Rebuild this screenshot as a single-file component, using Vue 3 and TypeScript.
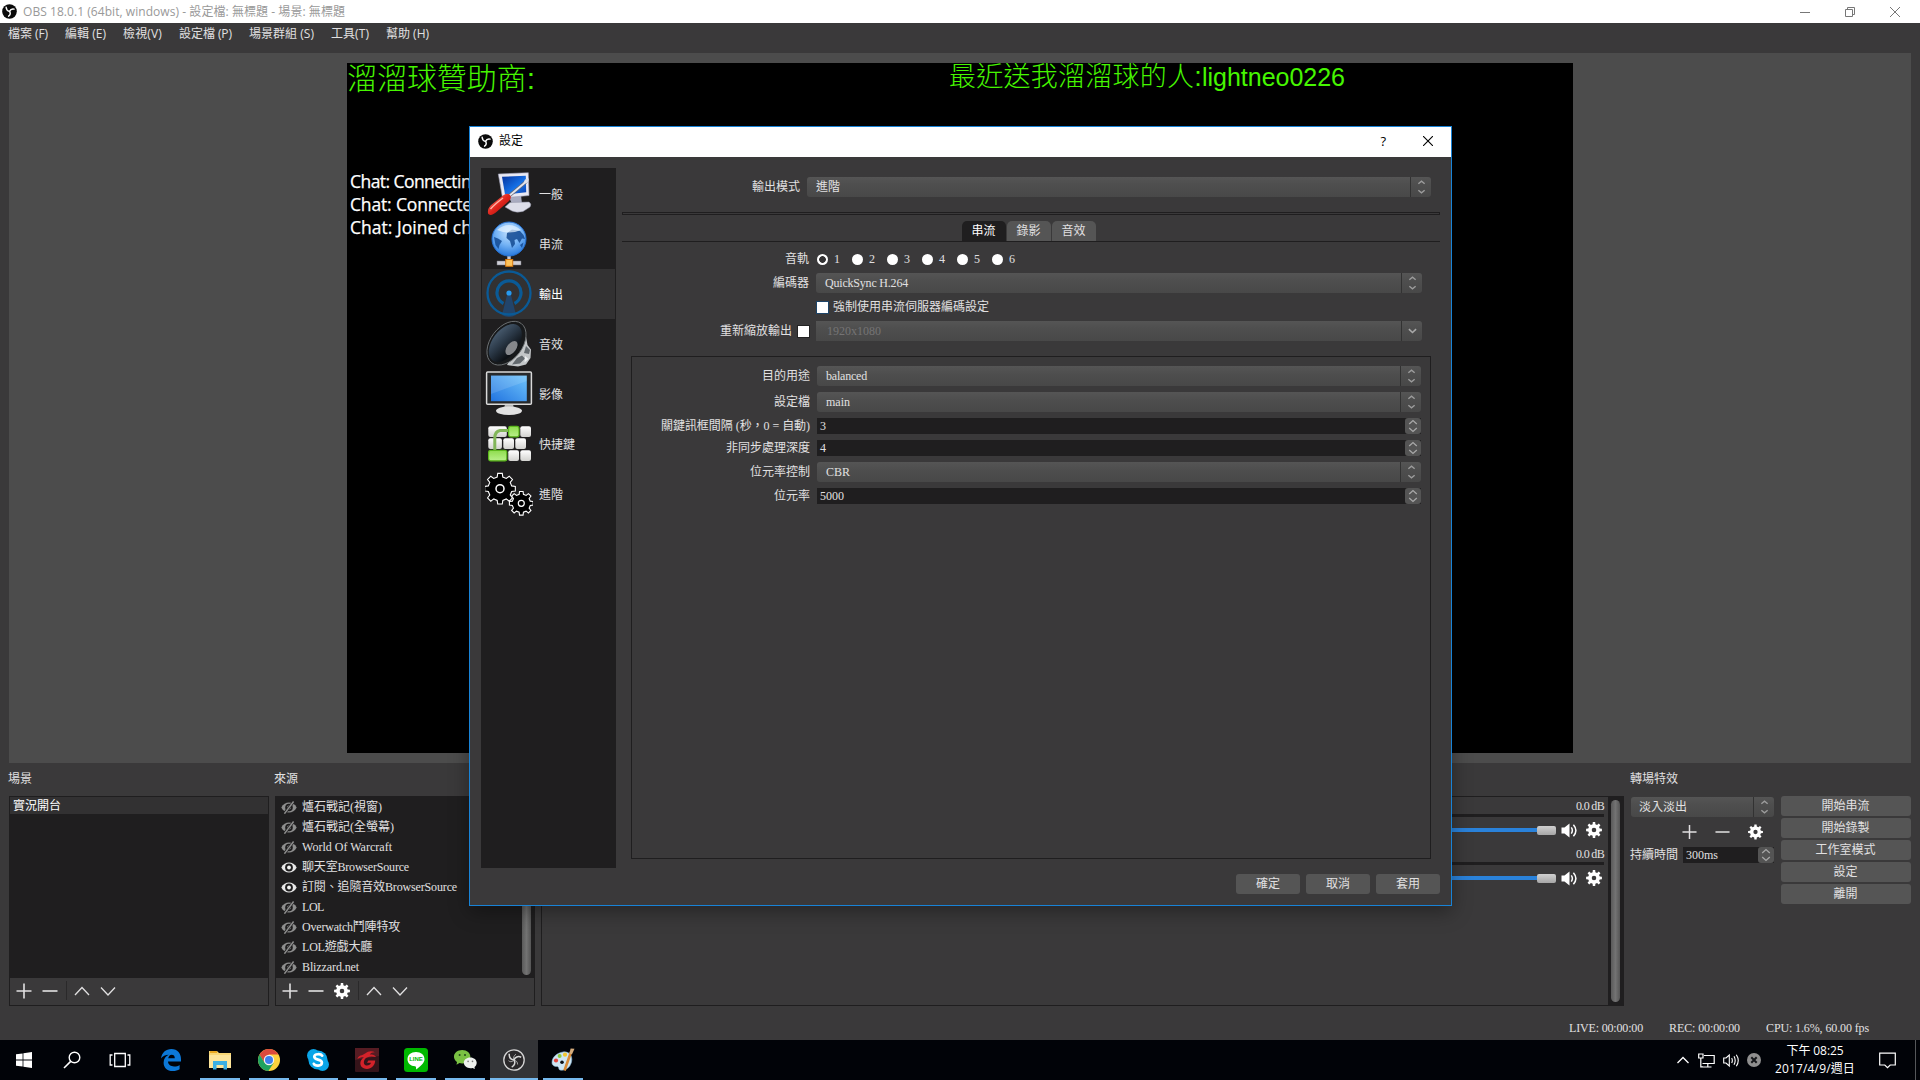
<script setup lang="ts">
interface Source { name: string; width: number; visible: boolean }
interface Field { label: string; labelWidth: number; value: string; valueWidth: number; kind: 'combo' | 'spin' }

// Spreads a text over a fixed width by adjusting its letter spacing.
const vFit = {
  mounted(el: HTMLElement, binding: { value: number }) {
    const count = Array.from(el.textContent ?? '').length
    if (!count) return
    const width = el.getBoundingClientRect().width
    el.style.letterSpacing = `${(binding.value - width) / count}px`
  },
}

// Outline of a toothed wheel.
function gear(cx: number, cy: number, outer: number, inner: number, teeth = 8): string {
  const step = (Math.PI * 2) / teeth
  const points: string[] = []
  for (let i = 0; i < teeth; i++) {
    const a = i * step - Math.PI / 2
    const corners: [number, number][] = [[-0.3, inner], [-0.19, outer], [0.19, outer], [0.3, inner]]
    for (const [offset, r] of corners) {
      const t = a + offset * step
      points.push(`${(cx + r * Math.cos(t)).toFixed(2)} ${(cy + r * Math.sin(t)).toFixed(2)}`)
    }
  }
  return `M${points.join('L')}Z`
}
function ring(cx: number, cy: number, r: number): string {
  return `M${cx - r} ${cy}a${r} ${r} 0 1 0 ${2 * r} 0a${r} ${r} 0 1 0 ${-2 * r} 0Z`
}
const solidGear = gear(8, 8, 8, 5.9) + ring(8, 8, 2.3)
const bigGear = gear(15, 18.7, 15.5, 12)
const smallGear = gear(36.3, 33.3, 12, 9.2)

const menus = [
  { text: '檔案 (F)', width: 40 },
  { text: '編輯 (E)', width: 41 },
  { text: '檢視(V)', width: 39 },
  { text: '設定檔 (P)', width: 53 },
  { text: '場景群組 (S)', width: 65 },
  { text: '工具(T)', width: 38 },
  { text: '幫助 (H)', width: 43 },
]

const sources: Source[] = [
  { name: '爐石戰記(視窗)', width: 80, visible: false },
  { name: '爐石戰記(全螢幕)', width: 92, visible: false },
  { name: 'World Of Warcraft', width: 90, visible: false },
  { name: '聊天室BrowserSource', width: 107, visible: true },
  { name: '訂閱、追隨音效BrowserSource', width: 155, visible: true },
  { name: 'LOL', width: 22, visible: false },
  { name: 'Overwatch鬥陣特攻', width: 98, visible: false },
  { name: 'LOL遊戲大廳', width: 70, visible: false },
  { name: 'Blizzard.net', width: 57, visible: false },
]

const pages = [
  { id: 'general', name: '一般' },
  { id: 'stream', name: '串流' },
  { id: 'output', name: '輸出' },
  { id: 'audio', name: '音效' },
  { id: 'video', name: '影像' },
  { id: 'hotkeys', name: '快捷鍵' },
  { id: 'advanced', name: '進階' },
]
const currentPage = 'output'
const tabs = ['串流', '錄影', '音效']
const tracks = [1, 2, 3, 4, 5, 6]

const fields: Field[] = [
  { label: '目的用途', labelWidth: 48, value: 'balanced', valueWidth: 41, kind: 'combo' },
  { label: '設定檔', labelWidth: 36, value: 'main', valueWidth: 24, kind: 'combo' },
  { label: '關鍵訊框間隔 (秒，0 = 自動)', labelWidth: 149, value: '3', valueWidth: 6, kind: 'spin' },
  { label: '非同步處理深度', labelWidth: 84, value: '4', valueWidth: 6, kind: 'spin' },
  { label: '位元率控制', labelWidth: 60, value: 'CBR', valueWidth: 24, kind: 'combo' },
  { label: '位元率', labelWidth: 36, value: '5000', valueWidth: 24, kind: 'spin' },
]
const controls = ['開始串流', '開始錄製', '工作室模式', '設定', '離開']
</script>

<template>
  <div class="screen">
    <svg class="defs" width="0" height="0">
      <symbol id="obs" viewBox="0 0 16 16">
        <circle cx="8" cy="8" r="7.8" fill="#0a0a0a" />
        <g fill="none" stroke="#fff" stroke-width="1.5" stroke-linecap="round">
          <path d="M4.4 3.4C4.6 6 6 7.4 8 7.9" />
          <path d="M12.9 5.4C10.6 4.9 8.8 6 8 7.9" />
          <path d="M7 13C8.9 11.6 9.2 9.6 8 7.9" />
        </g>
      </symbol>
      <symbol id="updown" viewBox="0 0 8 14">
        <path d="M1.2 4.2L4 1.8L6.8 4.2M1.2 9.8L4 12.2L6.8 9.8" fill="none" stroke="#9c9c9c" stroke-width="1.2" />
      </symbol>
      <symbol id="step" viewBox="0 0 10 14">
        <path d="M1.2 5L5 1.6L8.8 5M1.2 9L5 12.4L8.8 9" fill="none" stroke="#a8a8a8" stroke-width="1.3" />
      </symbol>
      <symbol id="plus" viewBox="0 0 16 16"><path d="M8 0.5V15.5M0.5 8H15.5" stroke="#e1e0e1" stroke-width="1.6" /></symbol>
      <symbol id="minus" viewBox="0 0 16 16"><path d="M0.5 8H15.5" stroke="#d0d0d0" stroke-width="1.8" /></symbol>
      <symbol id="up" viewBox="0 0 16 16"><path d="M1 12L8 4.5L15 12" fill="none" stroke="#e1e0e1" stroke-width="1.3" /></symbol>
      <symbol id="down" viewBox="0 0 16 16"><path d="M1 4.5L8 12L15 4.5" fill="none" stroke="#e1e0e1" stroke-width="1.3" /></symbol>
      <symbol id="gear" viewBox="0 0 16 16"><path :d="solidGear" fill="#fff" fill-rule="evenodd" /></symbol>
      <symbol id="eye" viewBox="0 0 16 12">
        <path d="M0.3 6C3.6-.6 12.4-.6 15.7 6C12.4 12.6 3.6 12.6 .3 6Z" fill="#e8e8e8" />
        <circle cx="8" cy="6" r="3.9" fill="#1f1e1f" /><circle cx="8" cy="6" r="1.9" fill="#f4f4f4" />
      </symbol>
      <symbol id="eye-off" viewBox="0 0 16 12">
        <path d="M0.3 6C3.6-.6 12.4-.6 15.7 6C12.4 12.6 3.6 12.6 .3 6Z" fill="#8d8d8d" />
        <circle cx="8" cy="6" r="3.8" fill="#1f1e1f" /><circle cx="8" cy="6" r="2" fill="#8d8d8d" />
        <path d="M3.2 12.2L13.2-.5" stroke="#1f1e1f" stroke-width="2.8" /><path d="M3.4 12.2L12.6 0" stroke="#8d8d8d" stroke-width="1.5" />
      </symbol>
      <symbol id="speaker" viewBox="0 0 17 15">
        <path d="M.5 4.5H3.5L8.5 .5V14.5L3.5 10.5H.5Z" fill="#fff" />
        <path d="M10.3 4.4Q12.4 7.5 10.3 10.6M12.4 1.8Q17.4 7.5 12.4 13.2" fill="none" stroke="#fff" stroke-width="1.5" />
      </symbol>
    </svg>

    <header class="titlebar">
      <svg class="title-logo"><use href="#obs" /></svg>
      <span v-fit="322" class="t">OBS 18.0.1 (64bit, windows) - 設定檔: 無標題 - 場景: 無標題</span>
      <div class="window-controls">
        <svg viewBox="0 0 10 10"><path d="M0 5.5H10" stroke="#777" /></svg>
        <svg viewBox="0 0 10 10"><path d="M.5 2.5H7.5V9.5H.5ZM2.5 2.5V.5H9.5V7.5H7.5" fill="none" stroke="#777" /></svg>
        <svg viewBox="0 0 10 10"><path d="M0 0L10 10M10 0L0 10" stroke="#777" /></svg>
      </div>
    </header>

    <nav class="menubar">
      <span v-for="m in menus" :key="m.text" v-fit="m.width" class="t">{{ m.text }}</span>
    </nav>

    <main class="preview">
      <div class="canvas">
        <div class="canvas-head">
          <div class="sponsor"><span v-fit="188" class="t">溜溜球贊助商:</span></div>
          <span v-fit="253" class="t recent">最近送我溜溜球的人:</span>
          <span v-fit="143" class="t donor">lightneo0226</span>
        </div>
        <div class="chat">
          <p><span v-fit="130" class="t">Chat: Connecting</span></p>
          <p><span v-fit="137" class="t">Chat: Connected.</span></p>
          <p><span v-fit="138" class="t">Chat: Joined chat</span></p>
        </div>
      </div>
    </main>

    <section class="docks">
      <div class="dock scenes">
        <h2><span v-fit="24" class="t">場景</span></h2>
        <div class="panel">
          <div class="list"><div class="scene"><span v-fit="48" class="t">實況開台</span></div></div>
          <div class="tools">
            <svg><use href="#plus" /></svg><svg><use href="#minus" /></svg><i></i>
            <svg><use href="#up" /></svg><svg><use href="#down" /></svg>
          </div>
        </div>
      </div>
      <div class="dock sources">
        <h2><span v-fit="24" class="t">來源</span></h2>
        <div class="panel">
          <div class="list with-scroll">
            <div class="items">
              <div v-for="s in sources" :key="s.name" class="source">
                <svg><use :href="s.visible ? '#eye' : '#eye-off'" /></svg>
                <span v-fit="s.width" class="t">{{ s.name }}</span>
              </div>
            </div>
            <div class="scroll"><b></b></div>
          </div>
          <div class="tools">
            <svg><use href="#plus" /></svg><svg><use href="#minus" /></svg><svg><use href="#gear" /></svg><i></i>
            <svg><use href="#up" /></svg><svg><use href="#down" /></svg>
          </div>
        </div>
      </div>
      <div class="dock mixer">
        <h2></h2>
        <div class="panel mixer-panel">
          <div class="channels">
            <div v-for="n in 2" :key="n" class="channel">
              <div class="db"><span v-fit="28" class="t">0.0 dB</span></div>
              <div class="meter"></div>
              <div class="volume">
                <div class="track"></div><div class="knob"></div>
                <svg class="spk"><use href="#speaker" /></svg>
                <svg class="cog"><use href="#gear" /></svg>
              </div>
            </div>
          </div>
          <div class="scroll"><b></b></div>
        </div>
      </div>
      <div class="dock transitions">
        <h2><span v-fit="48" class="t">轉場特效</span></h2>
        <div class="combo"><span v-fit="48" class="t">淡入淡出</span><div class="arrow"><svg><use href="#updown" /></svg></div></div>
        <div class="trans-tools">
          <svg><use href="#plus" /></svg><svg><use href="#minus" /></svg><svg><use href="#gear" /></svg>
        </div>
        <div class="duration">
          <span v-fit="48" class="t">持續時間</span>
          <div class="spin"><span v-fit="32" class="t">300ms</span><div class="stepper"><svg><use href="#step" /></svg></div></div>
        </div>
      </div>
      <div class="dock controls">
        <h2></h2>
        <button v-for="c in controls" :key="c"><span v-fit="c.length * 12" class="t">{{ c }}</span></button>
      </div>
    </section>

    <div class="status">
      <span v-fit="74" class="t">LIVE: 00:00:00</span>
      <span v-fit="71" class="t">REC: 00:00:00</span>
      <span v-fit="103" class="t">CPU: 1.6%, 60.00 fps</span>
    </div>

    <footer class="taskbar">
      <div class="task start">
        <svg width="16" height="16" viewBox="0 0 16 16"><path d="M0 2.3L6.6 1.4V7.6H0ZM7.4 1.2L16 0V7.6H7.4ZM0 8.4H6.6V14.6L0 13.7ZM7.4 8.4H16V16L7.4 14.8Z" fill="#fff" /></svg>
      </div>
      <div class="task start">
        <svg width="18" height="18" viewBox="0 0 18 18"><circle cx="11.5" cy="6.5" r="5.3" fill="none" stroke="#fff" stroke-width="1.4" /><path d="M7.7 10.4L1 17" stroke="#fff" stroke-width="1.6" /></svg>
      </div>
      <div class="task start">
        <svg width="22" height="16" viewBox="0 0 22 16"><path d="M5.7 1.5H16.3V14.5H5.7ZM3.5 3H1.2V13H3.5M18.5 3H20.8V13H18.5" fill="none" stroke="#fff" stroke-width="1.3" /></svg>
      </div>
      <div class="task edge">
        <svg width="20" height="22" viewBox="0 0 20 22"><path d="M0 9.4C.8 3.8 4.8 0 10.4 0C16.6 0 20 4.6 20 10V12.6H7C7.2 16 10 17.5 13 17.5C15.4 17.5 17.3 16.8 18.6 15.9V20.2C16.8 21.3 14.5 22 11.8 22C6 22 2.6 18.5 2.6 13.7C2.6 10 4.7 7.2 7.8 5.8C4.3 6 1.6 7.3 0 9.4ZM7.2 9.3H13.8C13.8 6.8 12.6 5.7 10.7 5.7C8.8 5.7 7.6 7.2 7.2 9.3Z" fill="#0c78d7" fill-rule="evenodd" /></svg>
      </div>
      <div class="task run">
        <svg width="22" height="20" viewBox="0 0 22 20"><path d="M0 1H8L10 3H22V18H0Z" fill="#f8d775" /><path d="M1 1H8V3H1Z" fill="#e9a820" /><path d="M0 5H22V18H0Z" fill="#fde59a" /><path d="M4 19.5V11H18V19.5H14.5V15H7.5V19.5Z" fill="#3bb0e4" /></svg>
      </div>
      <div class="task run">
        <svg width="22" height="22" viewBox="0 0 22 22"><circle cx="11" cy="11" r="11" fill="#fdd23e" /><path d="M1.5 5.5A11 11 0 0 1 20.5 5.5H11L6.2 13.5Z" fill="#dc4a3d" /><path d="M1.5 5.5A11 11 0 0 0 10.4 22L15.6 14L6.4 13.6Z" fill="#1fa260" /><circle cx="11" cy="11" r="5.2" fill="#f4f4f4" /><circle cx="11" cy="11" r="4" fill="#3e7fec" /></svg>
      </div>
      <div class="task run">
        <svg width="22" height="22" viewBox="0 0 22 22"><circle cx="6.5" cy="6.5" r="6.5" fill="#0aa5e8" /><circle cx="15.5" cy="15.5" r="6.5" fill="#0aa5e8" /><circle cx="11" cy="11" r="9.6" fill="#0aa5e8" /><path d="M15.2 6.7C14 4.8 7.4 4.3 7.3 7.8C7.3 11.6 15 9.7 14.9 13.8C14.8 17.6 8 17.4 6.8 14.8" fill="none" stroke="#fff" stroke-width="2.7" stroke-linecap="round" /></svg>
      </div>
      <div class="task run">
        <svg width="24" height="24" viewBox="0 0 24 24"><rect width="24" height="24" rx="1" fill="#35141a" /><path d="M0 0H24V8L0 12Z" fill="#561c23" /><path d="M2.5 11C3.5 6.5 7 8 10.5 5.2C13 3.2 16.5 2.4 20.5 4.4C17.5 4.2 15.8 5 14.8 6.6C17.6 6 19.8 6.8 21 9C16.5 7.8 11.5 8.4 9.8 11.2C7.8 14.5 9.2 17.6 12 17.6C14 17.6 15.4 16.6 16 14.8H12L13.4 12.6H20.2C20 17.6 16.4 21 12 21C7 21 4.4 17.4 5.6 13.6C6.2 11.8 7.4 10.2 9 9.2C6.8 9 4.4 9.4 2.5 11Z" fill="#d3222a" /></svg>
      </div>
      <div class="task run">
        <svg width="24" height="24" viewBox="0 0 24 24"><rect width="24" height="24" rx="3.5" fill="#00b900" /><path d="M12 4C17 4 20.5 7 20.5 11.2C20.5 15 16 18.6 12 21.5C12.4 19.8 12 18.5 11 18.3C6.8 18 3.5 15.2 3.5 11.2C3.5 7 7 4 12 4Z" fill="#fff" /><text x="12" y="13.2" text-anchor="middle" class="line-word">LINE</text></svg>
      </div>
      <div class="task run">
        <svg width="23" height="20" viewBox="0 0 23 20"><path d="M8.2 0C13 0 16.4 3 16.4 6.8C16.4 10.5 13 13.4 8.2 13.4L5.5 13L2.5 14.8L3 12C-3 7.5 .5 0 8.2 0Z" fill="#7ac143" /><path d="M16.3 7.5C20 7.5 22.7 9.8 22.7 12.8C22.7 14.6 21.8 16 20.5 17L20.8 19L18.6 17.9C14 19 9.8 16.3 9.8 12.8C9.8 9.8 12.6 7.5 16.3 7.5Z" fill="#eef1ee" /><circle cx="5.6" cy="4.9" r="1" fill="#24461a" /><circle cx="11" cy="4.9" r="1" fill="#24461a" /><circle cx="14.1" cy="11.4" r=".8" fill="#777" /><circle cx="18.5" cy="11.4" r=".8" fill="#777" /></svg>
      </div>
      <div class="task run active">
        <svg width="22" height="22" viewBox="0 0 22 22"><circle cx="11" cy="11" r="10.2" fill="#2a282a" stroke="#d6d6d6" stroke-width="1.3" /><g fill="none" stroke="#d6d6d6" stroke-width="1.5"><path d="M6.2 4.7C6 8.2 8 10.6 11 11" /><path d="M18.2 8.2C15 6.8 12 8 11 11" /><path d="M8.7 18.2C11.5 16.8 12.7 13.6 11 11" /><path d="M5.5 11.7C7 13 8.7 13.2 10.5 11.5M14.6 15.5C14.6 13.2 13.5 11.7 11.5 11.3M13 5.2C11 6.5 10.2 8.5 10.7 10.5" stroke-width=".7" /></g></svg>
      </div>
      <div class="task run">
        <svg width="24" height="24" viewBox="0 0 24 24"><path d="M12 4C18 3 22 8 20.5 14C19 20 14 23 9 22C7 21.5 8.6 19.5 6.5 18.6C4 18.5 1 18 1 14.5C1 9 6 5 12 4Z" fill="#cfe6f4" stroke="#86b4d4" stroke-width=".6" /><circle cx="5" cy="12.5" r="2.1" fill="#e2453d" /><circle cx="8.6" cy="8" r="2" fill="#8ccb3f" /><circle cx="14" cy="6.7" r="2.1" fill="#f3c52f" /><circle cx="11" cy="14.3" r="1.8" fill="#0a0e14" /><path d="M13.5 22.5L20 4" stroke="#d98a35" stroke-width="2.6" /><path d="M18.4 5.6L19.6 .6L23.5 .8L21 6.2Z" fill="#d6ac7c" /></svg>
      </div>

      <div class="tray">
        <svg class="more" width="12" height="8" viewBox="0 0 12 8"><path d="M.5 7L6 1.5L11.5 7" fill="none" stroke="#fff" stroke-width="1.3" /></svg>
        <svg width="17" height="15" viewBox="0 0 17 15"><path d="M6 2.5H16.2V10.5H4.5M4.5 14H13.5M9.8 10.5V14M.7 1H5V5H.7ZM2.8 5V13.8H5" fill="none" stroke="#fff" stroke-width="1.2" /></svg>
        <svg width="17" height="15" viewBox="0 0 17 15"><path d="M.7 5H3L6.3 2V13L3 10H.7Z" fill="none" stroke="#fff" stroke-width="1.1" /><path d="M8.7 5Q10 7.5 8.7 10M11 3.3Q13.4 7.5 11 11.7M13.3 1.7Q17.2 7.5 13.3 13.3" fill="none" stroke="#fff" stroke-width="1.1" /></svg>
        <svg width="14" height="14" viewBox="0 0 14 14"><circle cx="7" cy="7" r="7" fill="#8f8f8f" /><path d="M4.3 4.3L9.7 9.7M9.7 4.3L4.3 9.7" stroke="#15171a" stroke-width="2" /></svg>
      </div>
      <div class="clock">
        <div><span v-fit="57" class="t">下午 08:25</span></div>
        <div><span v-fit="80" class="t">2017/4/9/週日</span></div>
      </div>
      <svg class="notice" width="17" height="17" viewBox="0 0 17 17"><path d="M.7 1.2H16.3V13H11.2L8.5 15.7L5.8 13H.7Z" fill="none" stroke="#fff" stroke-width="1.2" /></svg>
      <div class="peek"></div>
    </footer>

    <div class="dialog">
      <div class="dialog-title">
        <svg class="dialog-logo"><use href="#obs" /></svg>
        <span v-fit="24" class="t">設定</span>
        <span class="help">?</span>
        <svg class="close" viewBox="0 0 10 10"><path d="M0 0L10 10M10 0L0 10" stroke="#000" stroke-width="1.1" /></svg>
      </div>
      <div class="dialog-body">
        <aside class="pages">
          <div v-for="p in pages" :key="p.id" :class="['page', { current: p.id === currentPage }]">
            <svg width="48" height="48" viewBox="0 0 48 48">
              <defs v-if="p.id === 'general'">
                <linearGradient id="screen-blue" x1="0" y1="0" x2="1" y2="1"><stop offset="0" stop-color="#06329c" /><stop offset=".6" stop-color="#1673ea" /><stop offset="1" stop-color="#0b3fae" /></linearGradient>
                <linearGradient id="red" x1="0" y1="0" x2="1" y2="1"><stop offset="0" stop-color="#ff8a78" /><stop offset=".5" stop-color="#e0241c" /><stop offset="1" stop-color="#8d0d0a" /></linearGradient>
                <radialGradient id="globe" cx=".5" cy=".3" r=".75"><stop offset="0" stop-color="#c4e2ff" /><stop offset=".5" stop-color="#76b4f5" /><stop offset="1" stop-color="#1b6fd8" /></radialGradient>
                <linearGradient id="tv" x1="0" y1="1" x2="1" y2="0"><stop offset="0" stop-color="#2274e0" /><stop offset="1" stop-color="#6fc4fb" /></linearGradient>
                <linearGradient id="cone" x1="0" y1="0" x2="1" y2=".3"><stop offset="0" stop-color="#4d6175" /><stop offset=".5" stop-color="#2c3a49" /><stop offset="1" stop-color="#0d1116" /></linearGradient>
                <linearGradient id="key" x1="0" y1="0" x2="0" y2="1"><stop offset="0" stop-color="#ffffff" /><stop offset="1" stop-color="#d2d2cf" /></linearGradient>
                <linearGradient id="green" x1="0" y1="0" x2="0" y2="1"><stop offset="0" stop-color="#8fdc4e" /><stop offset="1" stop-color="#b9f08a" /></linearGradient>
              </defs>
              <g v-if="p.id === 'general'">
                <path d="M23 25H36L37 34H27Z" fill="#a9abc0" />
                <path d="M20 37L25 32.5L44 32Q47 34 45 37L38 41.5Q31 43 27 41Z" fill="#dcdde9" stroke="#8f90a5" stroke-width=".5" />
                <path d="M13.3 4L43.3 2.7L44 25.5L17.5 28Z" fill="#e9e9f4" stroke="#9c9db5" stroke-width=".6" />
                <path d="M17 6.8L40.8 5.8L41.2 22.3L20 24.6Z" fill="url(#screen-blue)" />
                <path d="M24 26L42.5 10.5" stroke="#666a78" stroke-width="3.4" /><path d="M24 26L42.5 10.5" stroke="#e3e5ee" stroke-width="1.8" />
                <path d="M38 14L40 9.5L43.8 8.4L43.2 12.4Z" fill="#dfe1ea" />
                <path d="M3 41Q3 37 8 33.5L18 25.5Q22 22.5 25 25Q27 28 24 31L12 41.5Q7 46 4 44.6Q2.5 43.5 3 41Z" fill="url(#red)" />
                <path d="M5.5 39Q10 34 18 28" stroke="#ffb5a8" stroke-width="1.4" fill="none" />
              </g>
              <g v-else-if="p.id === 'stream'">
                <path d="M24 35V42" stroke="#c8c8d0" stroke-width="3.4" />
                <circle cx="24" cy="19" r="17" fill="url(#globe)" stroke="#2570d0" stroke-width="1" />
                <path d="M9 17L13 18.5L17 21L14.5 25L13.5 29L10.5 25ZM22 13L27 9.5L35 11L38.5 15L40 19L37 18.5L34.5 23L32 19L29.5 20L30 24L27 28L25 21L21.5 18ZM35 25L38.5 22.5L37 28Z" fill="#164c94" opacity=".88" />
                <path d="M12 10Q24 0 36 10Q24 15 12 10Z" fill="#e6f4ff" opacity=".7" />
                <path d="M12 41H36V45H12Z" fill="#cfcfd8" stroke="#77777f" stroke-width=".5" />
                <rect x="20.7" y="39.5" width="7" height="6.8" fill="#ffc35a" stroke="#d8790f" stroke-width="1" />
              </g>
              <g v-else-if="p.id === 'output'">
                <path d="M22.5 23H25.5L31 45Q24 49 17 45Z" fill="#22446a" />
                <g fill="none" stroke="#0a5a96"><circle cx="24" cy="23" r="21.5" stroke-width="2.3" /><path d="M18.5 33.5A12 12 0 1 1 29.5 33.5" stroke-width="3.2" /></g>
                <circle cx="24" cy="23" r="2.6" fill="#269af0" />
              </g>
              <g v-else-if="p.id === 'audio'">
                <path d="M40 11L42.5 25L46 29.5L45.5 38L41 44.5L33 46.5L22 45Z" fill="#c3c6c8" /><path d="M41 26L45 30L44 34L39 33ZM32 38L37 35.5L40 38.5L35 43.5L27 44.5Z" fill="#63696e" /><path d="M40 36L43.5 39L39.5 42.5Z" fill="#eef0f2" />
                <ellipse cx="21.5" cy="23.2" rx="16" ry="24.6" transform="rotate(37 21.5 23.2)" fill="#17191b" stroke="#6d7173" stroke-width=".9" />
                <ellipse cx="20.3" cy="23" rx="12.8" ry="21.6" transform="rotate(37 20.3 23)" fill="url(#cone)" />
                <ellipse cx="26.5" cy="28" rx="4.6" ry="8" transform="rotate(37 26.5 28)" fill="#85878b" />
              </g>
              <g v-else-if="p.id === 'video'">
                <path d="M20 34H28L29 39H19Z" fill="#b9b9b9" /><ellipse cx="24" cy="40.7" rx="13" ry="4.3" fill="#e2e2e2" />
                <rect x="1.6" y="2" width="44.8" height="32.2" rx="1" fill="#26282a" stroke="#d9d9d9" stroke-width="1.5" />
                <rect x="6" y="5.6" width="35.8" height="25.6" fill="url(#tv)" /><path d="M6 5.6H41.8V11L6 24Z" fill="#fff" opacity=".13" />
              </g>
              <g v-else-if="p.id === 'hotkeys'">
                <g fill="url(#key)"><rect x="3.3" y="6.2" width="18.5" height="10.8" rx="2" /><rect x="35.3" y="6.2" width="10.7" height="10.8" rx="2" /><rect x="3.3" y="18.3" width="13.6" height="10.8" rx="2" /><rect x="18.3" y="18.3" width="10.7" height="10.8" rx="2" /><rect x="30.3" y="18.3" width="10.7" height="10.8" rx="2" /><rect x="23.3" y="30.3" width="10.7" height="10.8" rx="2" /><rect x="35.3" y="30.3" width="10.7" height="10.8" rx="2" /></g>
                <path d="M23 10.5H15Q9.8 11.5 9.8 18V31" fill="none" stroke="#82b65a" stroke-width="3" />
                <g fill="url(#green)" stroke="#5cb81c" stroke-width="1.2"><rect x="23.6" y="6.4" width="10.4" height="10.4" rx="2" /><rect x="3.6" y="30.4" width="18.2" height="10.4" rx="2" /></g>
              </g>
              <g v-else fill="#000" stroke="#fff" stroke-width="1.1">
                <path :d="bigGear" /><circle cx="15" cy="18.7" r="4" stroke-width="1.5" />
                <path :d="smallGear" /><circle cx="36.3" cy="33.3" r="3" stroke-width="1.2" />
              </g>
            </svg>
            <span v-fit="p.name.length * 12" class="t">{{ p.name }}</span>
          </div>
        </aside>

        <div class="settings">
          <div class="row mode">
            <label><span v-fit="48" class="t">輸出模式</span></label>
            <div class="combo"><span v-fit="24" class="t">進階</span><div class="arrow"><svg><use href="#updown" /></svg></div></div>
          </div>
          <div class="divider"></div>
          <div class="tabs">
            <div v-for="(t, i) in tabs" :key="t" :class="['tab', { on: i === 0 }]"><span v-fit="24" class="t">{{ t }}</span></div>
          </div>
          <div class="tab-page">
            <div class="row short">
              <label><span v-fit="24" class="t">音軌</span></label>
              <div class="tracks">
                <div v-for="n in tracks" :key="n" class="track-option"><i :class="{ picked: n === 1 }"></i><span>{{ n }}</span></div>
              </div>
            </div>
            <div class="row">
              <label><span v-fit="36" class="t">編碼器</span></label>
              <div class="combo"><span v-fit="83" class="t">QuickSync H.264</span><div class="arrow"><svg><use href="#updown" /></svg></div></div>
            </div>
            <div class="row short">
              <label></label>
              <div class="enforce"><i class="check focus"></i><span v-fit="156" class="t">強制使用串流伺服器編碼設定</span></div>
            </div>
            <div class="row">
              <label class="rescale"><span v-fit="72" class="t">重新縮放輸出</span><i class="check"></i></label>
              <div class="combo disabled"><span v-fit="54" class="t">1920x1080</span><div class="arrow"><svg viewBox="0 0 8 14"><path d="M.8 5.3L4 8.3L7.2 5.3" fill="none" stroke="#a8a8a8" stroke-width="1.4" /></svg></div></div>
            </div>
          </div>
          <div class="group">
            <div v-for="f in fields" :key="f.label" class="row">
              <label><span v-fit="f.labelWidth" class="t">{{ f.label }}</span></label>
              <div v-if="f.kind === 'combo'" class="combo"><span v-fit="f.valueWidth" class="t">{{ f.value }}</span><div class="arrow"><svg><use href="#updown" /></svg></div></div>
              <div v-else class="spin"><span v-fit="f.valueWidth" class="t">{{ f.value }}</span><div class="stepper"><svg><use href="#step" /></svg></div></div>
            </div>
          </div>
          <div class="buttons">
            <button v-for="b in ['確定', '取消', '套用']" :key="b"><span v-fit="24" class="t">{{ b }}</span></button>
          </div>
        </div>
      </div>
    </div>
  </div>
</template>

<style>
html, body { margin: 0; background: #3a393a; overflow: hidden; }
</style>

<style scoped>
* { box-sizing: border-box; }
.screen {
  position: relative; width: 1920px; height: 1080px; overflow: hidden;
  display: flex; flex-direction: column; background: #3a393a; color: #e1e0e1;
  font: 12px/16px "Liberation Serif", "Noto Sans CJK TC", serif;
}
.defs { position: absolute; }
svg { display: block; flex: none; }
.t { display: inline-block; white-space: pre; }

.titlebar { height: 23px; flex: none; background: #fff; color: #999; display: flex; align-items: center; padding-left: 2px; font-family: "Open Sans", "Noto Sans CJK TC", sans-serif; }
.title-logo { width: 15px; height: 15px; margin-right: 6px; }
.window-controls { margin-left: auto; display: flex; gap: 35px; padding-right: 20px; }
.window-controls svg { width: 10px; height: 10px; }
.menubar { height: 30px; flex: none; display: flex; gap: 17px; padding: 3px 0 0 8px; font-family: "Open Sans", "Noto Sans CJK TC", sans-serif; }

.preview { height: 710px; flex: none; margin: 0 9px; background: #4c4c4c; padding: 10px 338px; }
.canvas { width: 1226px; height: 690px; background: #000; overflow: hidden; }
.canvas-head { display: flex; height: 107px; color: #46f600; white-space: nowrap; font-family: "Liberation Sans", "Noto Sans CJK TC Light", "Noto Sans CJK TC", sans-serif; font-weight: 300; }
.sponsor { width: 602px; flex: none; font-size: 30px; line-height: 31px; }
.recent { font-size: 27px; line-height: 29px; }
.donor { font-size: 25px; line-height: 28px; font-weight: 400; }
.chat { padding-left: 3px; color: #fff; font: 500 17.5px/23px "Open Sans", "Noto Sans", sans-serif; -webkit-text-stroke: .25px #fff; }
.chat p { margin: 0; }

.docks { height: 249px; flex: none; display: flex; padding: 0 9px; }
.dock { display: flex; flex-direction: column; flex: none; }
.dock h2 { margin: 0; height: 33px; flex: none; font-size: 12px; font-weight: 400; line-height: 32px; }
.dock h2 .t { line-height: 32px; margin-left: -1px; }
.scenes, .sources { width: 260px; margin-right: 6px; }
.mixer { width: 1083px; margin-right: 7px; }
.transitions { width: 143px; margin-right: 7px; }
.controls { width: 130px; }
.panel { height: 210px; border: 1px solid #1f1e1f; display: flex; flex-direction: column; }
.list { height: 181px; background: #1f1e1f; }
.with-scroll { display: flex; justify-content: space-between; overflow: hidden; }
.scene { height: 17px; background: #323132; padding-left: 3px; line-height: 18px; color: #fff; }
.scene .t { line-height: 18px; }
.tools { flex: 1; display: flex; align-items: center; padding: 0 0 2px 6px; gap: 10px; }
.tools svg { width: 16px; height: 16px; }
.tools i { width: 1px; height: 19px; background: #2a292a; margin: 0 -3px 0 -2px; }
.source { height: 20px; display: flex; align-items: center; padding-left: 5px; gap: 5px; }
.source svg { width: 16px; height: 13px; }
.scroll { width: 15px; background: #1f1e1f; display: flex; justify-content: center; padding: 3px 0; }
.scroll b { width: 9px; border-radius: 5px; background: linear-gradient(90deg, #5a5a5a, #737373 50%, #555); }

.mixer-panel { flex-direction: row; }
.channels { flex: 1; padding: 0 4px 0 6px; }
.channel { height: 48px; }
.db { height: 17px; line-height: 18px; text-align: right; }
.meter { height: 3px; background: #1f1e1f; }
.volume { height: 28px; display: flex; align-items: center; padding-bottom: 2px; }
.track { flex: 1; height: 4px; background: #2a82da; }
.knob { width: 19px; height: 9px; border-radius: 2px; background: linear-gradient(#d0d0d0, #a6a6a6); margin-right: 5px; }
.spk { width: 17px; height: 15px; margin-right: 8px; }
.cog { width: 16px; height: 16px; margin-right: 2px; }

.combo { height: 20px; display: flex; align-items: center; justify-content: space-between; border-radius: 3px; padding-left: 9px; background: linear-gradient(#555, #4e4e4e 40%, #484848); }
.arrow { width: 21px; height: 20px; border-left: 1px solid #323232; display: flex; align-items: center; justify-content: center; }
.arrow svg { width: 9px; height: 16px; }
.transitions .combo { margin-top: 1px; padding-left: 8px; }
.trans-tools { display: flex; height: 30px; align-items: center; justify-content: flex-end; gap: 18px; padding-right: 11px; }
.trans-tools svg { width: 15px; height: 16px; }
.duration { display: flex; align-items: center; justify-content: space-between; }
.duration .spin { width: 91px; }
.duration > .t { margin-left: -1px; }
.spin { height: 16px; background: #1f1e1f; display: flex; align-items: center; justify-content: space-between; padding-left: 3px; }
.stepper { width: 16px; height: 16px; border-radius: 3px; background: #545454; display: flex; align-items: center; justify-content: center; }
.stepper svg { width: 10px; height: 14px; }
button { border: 0; padding: 0; height: 20px; flex: none; border-radius: 3px; background: #555; color: inherit; font: inherit; line-height: 20px; }
.controls button { margin-bottom: 2px; padding-right: 1px; }

.status { height: 28px; flex: none; display: flex; justify-content: flex-end; align-items: center; gap: 26px; padding: 4px 51px 0 0; }

.taskbar { height: 40px; flex: none; background: #010308; display: flex; }
.task { height: 40px; width: 40px; margin: 0 4.5px; display: flex; align-items: center; justify-content: center; flex: none; }
.task.start { width: 48px; margin: 0; }
.task.edge { margin-left: 7px; }
.task.run { border-bottom: 2px solid #76b9ed; padding-top: 2px; }
.task.active { width: 48px; margin: 0 .5px; background: #333437; }
.line-word { font: 700 6px "Liberation Sans", sans-serif; fill: #00b900; }
.tray { margin-left: auto; display: flex; align-items: center; gap: 7.5px; }
.more { margin-right: 2px; }
.clock { width: 80px; margin-left: 14px; text-align: center; color: #fff; font: 12px/18px "Open Sans", "Noto Sans CJK TC", sans-serif; padding-top: 2px; }
.notice { margin: 12px 19px 0 24px; }
.peek { width: 5px; border-left: 1px solid #55575a; }

.dialog { position: absolute; left: 469px; top: 126px; width: 983px; height: 780px; border: 1px solid #1883d7; background: #3a393a; box-shadow: 0 6px 18px rgba(0, 0, 0, .35); }
.dialog-title { height: 30px; background: #fff; color: #000; display: flex; align-items: center; padding: 0 0 2px 8px; font-family: "Open Sans", "Noto Sans CJK TC", sans-serif; }
.dialog-logo { width: 15px; height: 15px; margin-right: 6px; }
.help { margin-left: auto; font-size: 13px; }
.close { width: 10px; height: 10px; margin: 0 18px 0 37px; }
.dialog-body { display: flex; height: 748px; padding-left: 11px; }
.pages { width: 135px; height: 700px; margin-top: 11px; background: #1f1e1f; padding: 1px; }
.page { height: 50px; display: flex; align-items: center; padding-left: 3px; gap: 6px; font-family: "Liberation Sans", "Noto Sans CJK TC", sans-serif; }
.page .t { padding-top: 2px; }
.page.current { background: #323132; color: #fff; }
.settings { width: 818px; margin-left: 6px; padding-top: 20px; }
.row { display: flex; align-items: center; gap: 7px; }
.row label { width: 187px; flex: none; display: flex; justify-content: flex-end; align-items: center; }
.row .combo, .row .spin { flex: 1; }
.mode { padding-right: 9px; }
.mode label { width: 178px; }
.divider { height: 3px; border: 1px solid #1f1e1f; margin-top: 15px; }
.tabs { display: flex; gap: 1px; margin-top: 6px; padding-left: 340px; border-bottom: 1px solid #1f1e1f; height: 21px; }
.tab { width: 44px; height: 20px; border-radius: 5px 5px 0 0; background: #555; text-align: center; padding: 2px 1px 0 0; }
.tab.on { background: #1f1e1f; color: #fff; }
.tab-page { padding: 8px 18px 0 0; display: flex; flex-direction: column; gap: 5px; }
.short { height: 18px; }
.tracks { display: flex; padding-left: 1px; }
.track-option { width: 35px; display: flex; align-items: center; gap: 6px; }
.track-option i { width: 11px; height: 11px; border-radius: 50%; background: #fff; }
.track-option i.picked { background: radial-gradient(circle, #343334 3px, #fff 3.7px); }
.enforce { display: flex; align-items: center; gap: 4px; }
.check { width: 13px; height: 13px; background: #fff; border: 1px solid #232323; }
.check.focus { border-color: #1d4468; }
.row label.rescale { width: 188px; margin-right: -1px; }
label .check { margin-left: 5px; }
.disabled { color: #757475; padding-left: 11px; border-radius: 0 3px 3px 0; }
.group { margin: 15px 9px 0; height: 503px; border: 1px solid #1f1e1f; padding: 9px 9px 0 0; display: flex; flex-direction: column; gap: 6px; }
.group .row label { width: 178px; margin-right: 1px; }
.group .row { gap: 6px; }
.buttons { display: flex; justify-content: flex-end; gap: 6px; margin-top: 15px; }
.buttons button { width: 64px; }
</style>
